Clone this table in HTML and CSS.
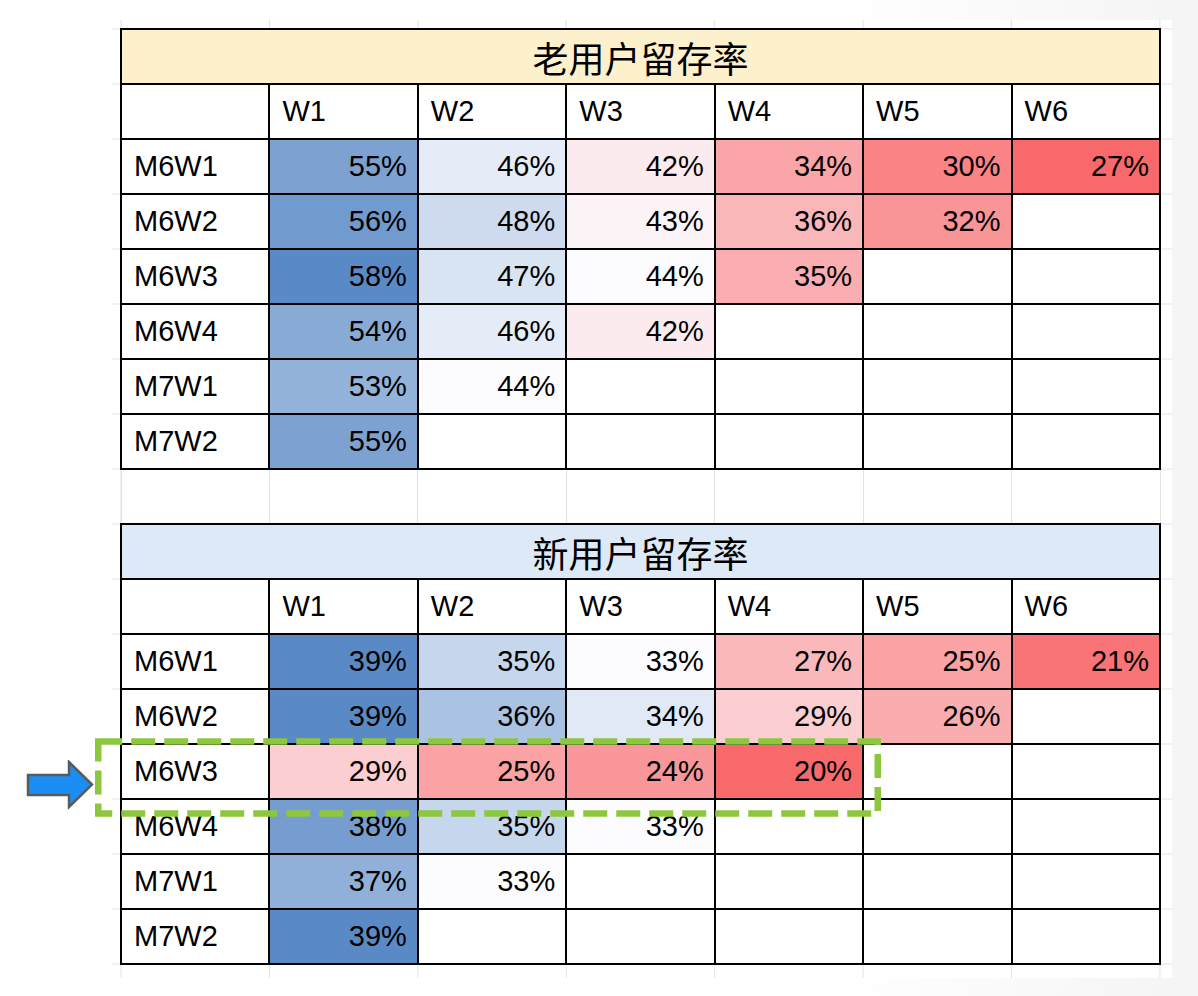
FILE: index.html
```html
<!DOCTYPE html>
<html lang="zh-CN">
<head>
<meta charset="utf-8">
<title>留存率</title>
<link rel="stylesheet" href="styles.css">
</head>
<body>
<div class="page">
  <div class="sheet">
    <table class="grid">
      <tr><td class="title title-old" colspan="7">老用户留存率</td></tr>
      <tr class="head"><td></td><td>W1</td><td>W2</td><td>W3</td><td>W4</td><td>W5</td><td>W6</td></tr>
      <tr><td>M6W1</td><td class="num" style="background:rgb(125,162,210)">55%</td><td class="num" style="background:rgb(229,236,247)">46%</td><td class="num" style="background:rgb(252,235,238)">42%</td><td class="num" style="background:rgb(250,166,168)">34%</td><td class="num" style="background:rgb(249,131,133)">30%</td><td class="num" style="background:rgb(248,105,107)">27%</td></tr>
      <tr><td>M6W2</td><td class="num" style="background:rgb(113,154,206)">56%</td><td class="num" style="background:rgb(206,219,239)">48%</td><td class="num" style="background:rgb(252,243,246)">43%</td><td class="num" style="background:rgb(250,183,185)">36%</td><td class="num" style="background:rgb(249,148,151)">32%</td><td></td></tr>
      <tr><td>M6W3</td><td class="num" style="background:rgb(90,138,198)">58%</td><td class="num" style="background:rgb(217,228,243)">47%</td><td class="num" style="background:rgb(252,252,255)">44%</td><td class="num" style="background:rgb(250,174,177)">35%</td><td></td><td></td></tr>
      <tr><td>M6W4</td><td class="num" style="background:rgb(136,171,214)">54%</td><td class="num" style="background:rgb(229,236,247)">46%</td><td class="num" style="background:rgb(252,235,238)">42%</td><td></td><td></td><td></td></tr>
      <tr><td>M7W1</td><td class="num" style="background:rgb(148,179,218)">53%</td><td class="num" style="background:rgb(252,252,255)">44%</td><td></td><td></td><td></td><td></td></tr>
      <tr><td>M7W2</td><td class="num" style="background:rgb(125,162,210)">55%</td><td></td><td></td><td></td><td></td><td></td></tr>
      <tr class="gap"><td></td><td></td><td></td><td></td><td></td><td></td><td></td></tr>
      <tr><td class="title title-new" colspan="7">新用户留存率</td></tr>
      <tr class="head"><td></td><td>W1</td><td>W2</td><td>W3</td><td>W4</td><td>W5</td><td>W6</td></tr>
      <tr><td>M6W1</td><td class="num" style="background:rgb(90,138,198)">39%</td><td class="num" style="background:rgb(198,214,236)">35%</td><td class="num" style="background:rgb(252,252,255)">33%</td><td class="num" style="background:rgb(250,184,187)">27%</td><td class="num" style="background:rgb(250,162,164)">25%</td><td class="num" style="background:rgb(248,116,118)">21%</td></tr>
      <tr><td>M6W2</td><td class="num" style="background:rgb(90,138,198)">39%</td><td class="num" style="background:rgb(171,195,227)">36%</td><td class="num" style="background:rgb(225,233,246)">34%</td><td class="num" style="background:rgb(251,207,210)">29%</td><td class="num" style="background:rgb(250,173,175)">26%</td><td></td></tr>
      <tr><td>M6W3</td><td class="num" style="background:rgb(251,207,210)">29%</td><td class="num" style="background:rgb(250,162,164)">25%</td><td class="num" style="background:rgb(249,150,153)">24%</td><td class="num" style="background:rgb(248,105,107)">20%</td><td></td><td></td></tr>
      <tr><td>M6W4</td><td class="num" style="background:rgb(117,157,208)">38%</td><td class="num" style="background:rgb(198,214,236)">35%</td><td class="num" style="background:rgb(252,252,255)">33%</td><td></td><td></td><td></td></tr>
      <tr><td>M7W1</td><td class="num" style="background:rgb(144,176,217)">37%</td><td class="num" style="background:rgb(252,252,255)">33%</td><td></td><td></td><td></td><td></td></tr>
      <tr><td>M7W2</td><td class="num" style="background:rgb(90,138,198)">39%</td><td></td><td></td><td></td><td></td><td></td></tr>
    </table>
  </div>

  <svg class="arrow" width="70" height="50" viewBox="0 0 70 50" aria-hidden="true">
    <polygon points="2,15 43,15 43,2 66,24.5 43,47 43,35 2,35" fill="#1b8ef5" stroke="#5a5a5a" stroke-width="2.5" stroke-linejoin="miter"/>
  </svg>

  <svg class="focus" width="800" height="92" viewBox="0 0 800 92" aria-hidden="true">
    <rect x="8.25" y="9.5" width="779.5" height="72" fill="none" stroke="#8dc63f" stroke-width="6.5" stroke-dasharray="24 9"/>
  </svg>
</div>
</body>
</html>
```

FILE: styles.css
```css
html, body {
  margin: 0;
  padding: 0;
}

body {
  background: #ffffff;
  font-family: "Liberation Sans", Arial, "Noto Sans CJK SC", sans-serif;
  color: #000;
}

.page {
  position: relative;
  width: 1198px;
  height: 996px;
  overflow: hidden;
  background: linear-gradient(to right, #ffffff 0, #ffffff 70%, #f5f5f5 98%);
}

.sheet {
  margin-left: 112px;
  margin-top: 20px;
  padding: 8px 11px 13px 8px;
  width: fit-content;
  background-color: #ffffff;
  background-image:
    linear-gradient(to right, #e2e2e2 0, #e2e2e2 1px, transparent 1px),
    linear-gradient(to bottom, #e2e2e2 0, #e2e2e2 1px, transparent 1px);
  background-size: 148.43px 100%, 100% 55px;
  background-position: 8.5px 0, 0 8.5px;
}

.grid {
  border-collapse: collapse;
  table-layout: fixed;
  width: 1041px;
  border: none;
}

.grid tr {
  height: 55px;
}

.grid td {
  border: 2px solid #000;
  background: #fff;
  padding: 0 10px 0 12px;
  font-size: 29px;
  line-height: 1;
  white-space: nowrap;
  vertical-align: middle;
}

.grid td.num {
  text-align: right;
}

.grid td.title {
  text-align: center;
  font-family: "Noto Sans CJK SC", "Liberation Sans", sans-serif;
  font-size: 36px;
  padding: 0;
}

.title-old {
  background: #fdf1cd !important;
}

.title-new {
  background: #dde9f6 !important;
}

.grid tr.gap td {
  border: none;
  border-left: 1px solid #e2e2e2;
  border-right: 1px solid #e2e2e2;
  background: #fff;
}

.arrow {
  position: absolute;
  left: 26px;
  top: 760px;
}

.focus {
  position: absolute;
  left: 90px;
  top: 732px;
}
```
